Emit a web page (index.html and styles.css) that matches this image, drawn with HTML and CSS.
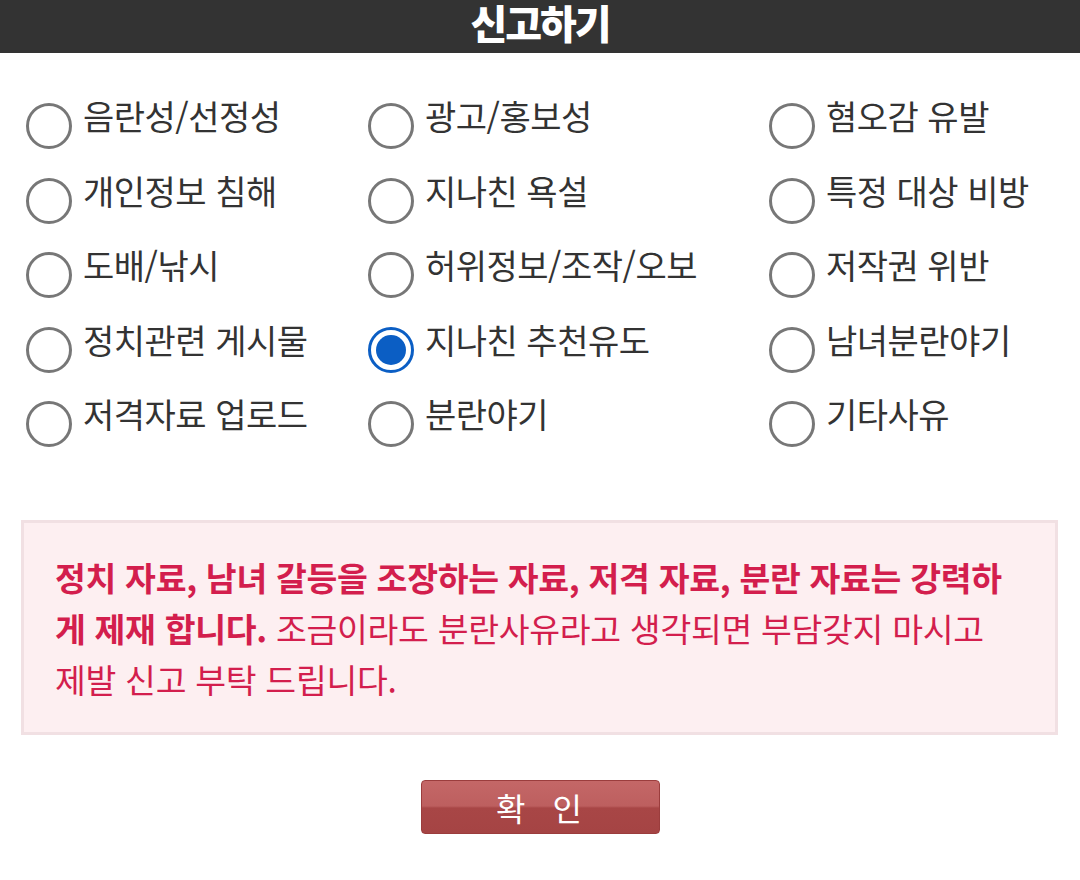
FILE: index.html
```html
<!DOCTYPE html>
<html lang="ko">
<head>
<meta charset="utf-8">
<link rel="stylesheet" href="styles.css">
</head>
<body>
<header class="top"><h1 class="title">신고하기</h1></header>
<form class="report">
  <div class="options">
    <label class="opt"><input type="radio" name="r"><span class="dot"></span><span class="txt">음란성/선정성</span></label>
    <label class="opt"><input type="radio" name="r"><span class="dot"></span><span class="txt">광고/홍보성</span></label>
    <label class="opt"><input type="radio" name="r"><span class="dot"></span><span class="txt">혐오감 유발</span></label>
    <label class="opt"><input type="radio" name="r"><span class="dot"></span><span class="txt">개인정보 침해</span></label>
    <label class="opt"><input type="radio" name="r"><span class="dot"></span><span class="txt">지나친 욕설</span></label>
    <label class="opt"><input type="radio" name="r"><span class="dot"></span><span class="txt">특정 대상 비방</span></label>
    <label class="opt"><input type="radio" name="r"><span class="dot"></span><span class="txt">도배/낚시</span></label>
    <label class="opt"><input type="radio" name="r"><span class="dot"></span><span class="txt">허위정보/조작/오보</span></label>
    <label class="opt"><input type="radio" name="r"><span class="dot"></span><span class="txt">저작권 위반</span></label>
    <label class="opt"><input type="radio" name="r"><span class="dot"></span><span class="txt">정치관련 게시물</span></label>
    <label class="opt"><input type="radio" name="r" checked><span class="dot"></span><span class="txt">지나친 추천유도</span></label>
    <label class="opt"><input type="radio" name="r"><span class="dot"></span><span class="txt">남녀분란야기</span></label>
    <label class="opt"><input type="radio" name="r"><span class="dot"></span><span class="txt">저격자료 업로드</span></label>
    <label class="opt"><input type="radio" name="r"><span class="dot"></span><span class="txt">분란야기</span></label>
    <label class="opt"><input type="radio" name="r"><span class="dot"></span><span class="txt">기타사유</span></label>
  </div>
  <div class="notice"><p><strong>정치 자료, 남녀 갈등을 조장하는 자료, 저격 자료, 분란 자료는 강력하게 제재 합니다.</strong> 조금이라도 분란사유라고 생각되면 부담갖지 마시고 제발 신고 부탁 드립니다.</p></div>
  <div class="actions"><button type="button" class="ok">확 인</button></div>
</form>
</body>
</html>
```
FILE: styles.css
```css
html, body {
  margin: 0;
  padding: 0;
  background: #fff;
  font-family: "Noto Sans CJK KR", "Noto Sans", sans-serif;
  color: #333;
}
.top {
  box-sizing: border-box;
  height: 53px;
  padding-bottom: 8px;
  background: #333333;
  display: flex;
  justify-content: center;
}
.title {
  margin: 0;
  font-size: 40px;
  line-height: 45px;
  font-weight: 900;
  color: #fff;
  letter-spacing: -2px;
}
.report {
  margin: 0;
}
.options {
  display: grid;
  grid-template-columns: 342px 401px 1fr;
  grid-auto-rows: 74.5px;
  padding: 50px 0 0 26px;
}
.opt {
  display: flex;
  align-items: flex-start;
  gap: 11px;
  cursor: pointer;
}
.opt input {
  display: none;
}
.dot {
  box-sizing: border-box;
  width: 46px;
  height: 46px;
  border: 3px solid #777;
  border-radius: 50%;
  flex: none;
  display: flex;
  align-items: center;
  justify-content: center;
}
.opt input:checked + .dot {
  border-color: #0b5ec4;
}
.opt input:checked + .dot::after {
  content: "";
  width: 30px;
  height: 30px;
  border-radius: 50%;
  background: #0b5ec4;
}
.txt {
  font-size: 34px;
  line-height: 34px;
  margin-top: -4px;
  color: #333;
  letter-spacing: -0.5px;
}
.notice {
  margin: 44px 22px 0 21px;
  background: #fdeff1;
  border: 3px solid #f1e0e3;
  padding: 28px 40px 28px 31px;
}
.notice p {
  margin: 0;
  font-size: 33.5px;
  line-height: 51px;
  color: #d31e4d;
  letter-spacing: -0.3px;
}
.notice strong {
  font-weight: 700;
}
.actions {
  display: flex;
  justify-content: center;
  padding-top: 45px;
}
.ok {
  width: 239px;
  height: 54px;
  border: 1px solid #9b3d3d;
  border-radius: 4px;
  background: linear-gradient(#c46767 0%, #bd5f5f 48%, #a84646 52%, #a54444 100%);
  color: #fff;
  font-family: "Noto Sans CJK KR", sans-serif;
  font-size: 32px;
  line-height: 50px;
  padding: 0;
  letter-spacing: 2px;
  word-spacing: 14px;
}
```
